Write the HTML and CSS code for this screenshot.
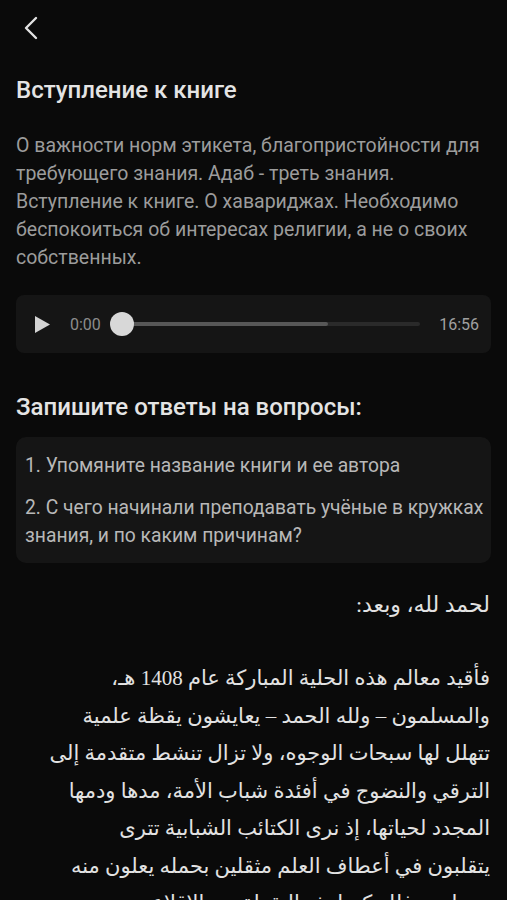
FILE: index.html
```html
<!DOCTYPE html>
<html lang="ru">
<head>
<meta charset="utf-8">
<link rel="stylesheet" href="styles.css">
</head>
<body>
<div class="page">
  <header class="topbar">
    <svg class="back" width="16" height="24" viewBox="0 0 16 24"><path d="M13 2 L3 12 L13 22" fill="none" stroke="#e2e2e2" stroke-width="2.4" stroke-linecap="round" stroke-linejoin="round"/></svg>
  </header>
  <h1 class="title">Вступление к книге</h1>
  <p class="desc">О важности норм этикета, благопристойности для требующего знания. Адаб - треть знания. Вступление к книге. О хавариджах. Необходимо беспокоиться об интересах религии, а не о своих собственных.</p>
  <div class="player">
    <svg class="play" width="17" height="19" viewBox="0 0 17 19"><path d="M1 1 L16 9.5 L1 18 Z" fill="#d4d4d4"/></svg>
    <span class="time start">0:00</span>
    <div class="track">
      <div class="buffer" style="width:69%"></div>
      <div class="thumb"></div>
    </div>
    <span class="time end">16:56</span>
  </div>
  <h2 class="heading">Запишите ответы на вопросы:</h2>
  <div class="questions">
    <p class="q">1. Упомяните название книги и ее автора</p>
    <p class="q">2. С чего начинали преподавать учёные в кружках знания, и по каким причинам?</p>
  </div>
  <div class="arabic" dir="rtl" lang="ar">
    <p class="ar-first">لحمد لله، وبعد:</p>
    <p class="ar-para">فأقيد معالم هذه الحلية المباركة عام 1408 هـ،<br>والمسلمون – ولله الحمد – يعايشون يقظة علمية<br>تتهلل لها سبحات الوجوه، ولا تزال تنشط متقدمة إلى<br>الترقي والنضوج في أفئدة شباب الأمة، مدها ودمها<br>المجدد لحياتها، إذ نرى الكتائب الشبابية تترى<br>يتقلبون في أعطاف العلم مثقلين بحمله يعلون منه<br>وينهلون، فلله كم لهذه اليقظة من الإقلاع</p>
  </div>
</div>
</body>
</html>
```

FILE: styles.css
```css
html, body {
  margin: 0;
  padding: 0;
  background: #0a0a0a;
}
body {
  font-family: Roboto, "Noto Sans", sans-serif;
  overflow: hidden;
  height: 900px;
}
.page {
  padding: 0 16px;
}
.topbar {
  height: 76px;
  display: flex;
  align-items: flex-start;
  padding-top: 16px;
  box-sizing: border-box;
}
.back {
  display: block;
  margin-left: 7px;
}
.title {
  margin: 0;
  font-size: 24px;
  font-weight: 500;
  line-height: 28px;
  color: #e4e4e4;
}
.desc {
  margin: 28px 0 0;
  font-size: 19.5px;
  line-height: 28px;
  color: #9c9c9c;
}
.player {
  margin-top: 23px;
  height: 58px;
  background: #151515;
  border-radius: 8px;
  display: flex;
  align-items: center;
  padding: 0 12px 0 18px;
}
.play {
  display: block;
  flex: none;
}
.time {
  font-size: 16px;
  color: #8c8c8c;
}
.time.start {
  margin-left: 19px;
}
.time.end {
  color: #a0a0a0;
  margin-left: 19px;
}
.track {
  position: relative;
  flex: 1;
  height: 4px;
  background: #2a2a2a;
  border-radius: 2px;
  margin-left: 21px;
}
.buffer {
  height: 100%;
  background: #575757;
  border-radius: 2px;
}
.thumb {
  position: absolute;
  left: -12px;
  top: -10px;
  width: 24px;
  height: 24px;
  border-radius: 50%;
  background: #d8d8d8;
}
.heading {
  margin: 40px 0 0;
  font-size: 24px;
  font-weight: 500;
  line-height: 28px;
  color: #e4e4e4;
}
.questions {
  margin-top: 16px;
  background: #151515;
  border-radius: 10px;
  padding: 15px 3px 13px 9px;
}
.q {
  margin: 0;
  font-size: 19.3px;
  line-height: 28px;
  color: #b8b8b8;
}
.q + .q {
  margin-top: 14px;
}
.arabic {
  font-family: "Liberation Serif", "DejaVu Serif", "DejaVu Sans", serif;
  color: #e2e2e2;
  text-align: right;
  padding-right: 1px;
}
.ar-first {
  margin: 23px 0 0;
  font-size: 22px;
  line-height: 38px;
}
.ar-para {
  margin: 36px 0 0;
  font-size: 21px;
  line-height: 37.5px;
  white-space: nowrap;
}
```
